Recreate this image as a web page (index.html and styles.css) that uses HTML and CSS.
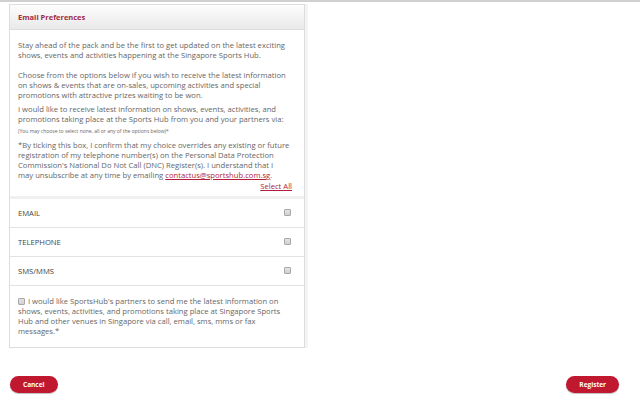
FILE: index.html
```html
<!DOCTYPE html>
<html lang="en">
<head>
  <meta charset="UTF-8" />
  <title>Email Preferences</title>
  <link rel="stylesheet" href="styles.css">
</head>
<body>

<div class="page">
  <div class="panel">
    <div class="panel-head">Email Preferences</div>
    <div class="panel-body">
      <p class="first">Stay ahead of the pack and be the first to get updated on the latest exciting shows, events and activities happening at the Singapore Sports Hub.</p>
      <p class="gap">Choose from the options below if you wish to receive the latest information on shows &amp; events that are on-sales, upcoming activities and special promotions with attractive prizes waiting to be won.</p>
      <p>I would like to receive latest information on shows, events, activities, and promotions taking place at the Sports Hub from you and your partners via:</p>
      <p class="small">(You may choose to select none, all or any of the options below)*</p>
      <p>*By ticking this box, I confirm that my choice overrides any existing or future registration of my telephone number(s) on the Personal Data Protection Commission's National Do Not Call (DNC) Register(s). I understand that I may unsubscribe at any time by emailing <a href="#">contactus@sportshub.com.sg</a>.</p>
      <div class="select-all"><a href="#">Select All</a></div>
    </div>

    <label class="option"><span>EMAIL</span><input type="checkbox"></label>
    <label class="option"><span>TELEPHONE</span><input type="checkbox"></label>
    <label class="option"><span>SMS/MMS</span><input type="checkbox"></label>

    <label class="partners">
      <input type="checkbox"> I would like SportsHub's partners to send me the latest information on shows, events, activities, and promotions taking place at Singapore Sports Hub and other venues in Singapore via call, email, sms, mms or fax messages.*
    </label>
  </div>

  <div class="actions">
    <button class="btn">Cancel</button>
    <button class="btn">Register</button>
  </div>
</div>

</body>
</html>
```

FILE: styles.css
```css
* { box-sizing: border-box; }
body {
  margin: 0;
  background-color: #fff;
  color: #666;
  font-family: 'Open Sans', sans-serif;
  border-top: 2px solid #d0d0d0;
}
.page {
  height: 394px;
  display: flex;
  flex-direction: column;
}
.panel {
  margin: 2px 0 0 9px;
  width: 296px;
  border: 1px solid #ddd;
  box-shadow: 3px 0 0 #f4f4f4;
}
.panel-head {
  height: 25px;
  padding: 0 8px;
  display: flex;
  align-items: center;
  font-size: 7.5px;
  font-weight: bold;
  color: #a32a3f;
  background: linear-gradient(#fdfdfd, #e9e9e9);
  border-bottom: 1px solid #ddd;
}
.panel-body {
  padding: 10px 14px 5px 8px;
  border-bottom: 3px solid #f0f0f0;
}
p {
  margin: 0 0 3px;
  font-size: 7.65px;
  line-height: 10px;
}
p.gap { margin-top: 10px; margin-bottom: 4px; }
p.first { margin: 0; }
p.small {
  font-size: 5px;
  line-height: 9px;
  margin-bottom: 4px;
}
a {
  color: #b01e3a;
  text-decoration: underline;
}
.select-all {
  text-align: right;
  font-size: 7.65px;
  line-height: 10px;
  margin: -2px -2px 0 0;
}
.option {
  height: 29px;
  padding: 0 8px;
  display: flex;
  align-items: center;
  justify-content: space-between;
  font-size: 7.65px;
  color: #444;
  border-bottom: 1px solid #e2e2e2;
}
input[type="checkbox"] {
  appearance: none;
  width: 7px;
  height: 7px;
  margin: 0 5px 2px 0;
  border: 1px solid #a8a8a8;
  border-radius: 1px;
  background: linear-gradient(#e4e4e4, #d0d0d0);
}
.partners {
  display: block;
  padding: 10px 16px 11px 8px;
  font-size: 7.65px;
  line-height: 10px;
}
.partners input { vertical-align: -1px; margin: 0 1px 0 0; }
.actions {
  margin-top: auto;
  padding: 0 21px 3px 10px;
  display: flex;
  justify-content: space-between;
}
.btn {
  height: 17px;
  padding: 0 13px;
  border: none;
  border-radius: 9px;
  background-color: #c0182f;
  color: #fff;
  font-family: 'Open Sans', sans-serif;
  font-size: 6.5px;
  font-weight: bold;
  box-shadow: 0 1px 1px rgba(0,0,0,0.25);
}
```
